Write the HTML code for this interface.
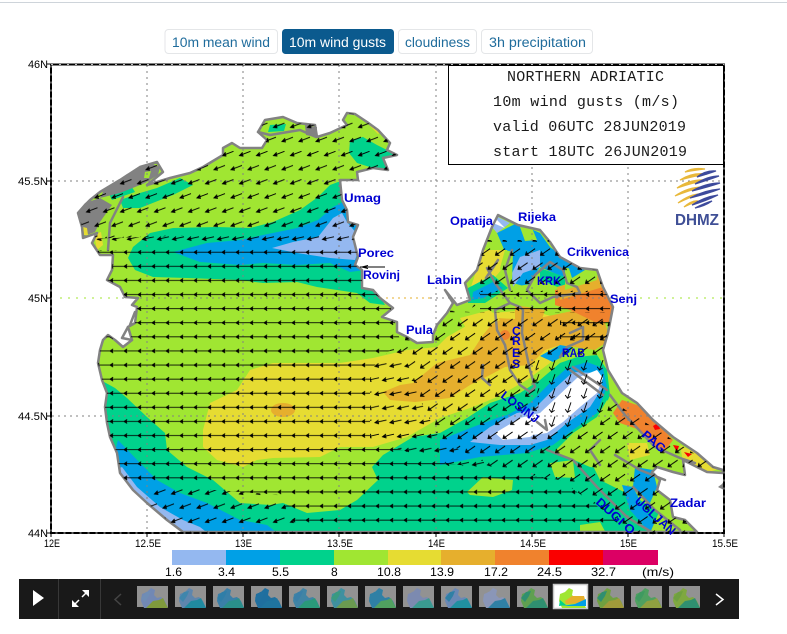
<!DOCTYPE html>
<html lang="en"><head><meta charset="utf-8"><title>Northern Adriatic</title>
<style>
html,body{margin:0;padding:0;background:#fff;width:787px;height:634px;overflow:hidden}
svg{display:block}
text{font-family:"Liberation Sans",sans-serif}
.btn{font-size:13.5px;fill:#1f6c9c}
.ttl{font-family:"Liberation Mono",monospace;font-size:15px;fill:#1a1a1a}
.ax{font-size:11px;fill:#000}
.lb{font-size:12px;font-weight:bold;fill:#0000d2}
.g{fill:none;stroke:#828282;stroke-width:1;stroke-dasharray:2 4}
.isl{fill:none;stroke:#828282;stroke-width:2.5;stroke-linejoin:round;stroke-linecap:round}
.a{fill:none;stroke:#000;stroke-width:.95}
</style></head><body>
<svg width="787" height="634" viewBox="0 0 787 634" xmlns="http://www.w3.org/2000/svg">
<defs>
<polygon id="sea" points="78,213 85,205 90,200 100,192 120,180 140,167 157,162 163,172 147,185 170,178 190,173 203,167 223,155 223,148 232,143 240,148 262,148 267,140 258,132 265,120 283,117 297,123 315,125 317,137 330,133 347,125 343,120 347,113 355,114 367,122 378,130 390,143 387,150 397,155 383,158 388,170 373,168 357,172 358,180 340,180 342,200 347,210 348,222 358,225 353,237 358,257 355,265 362,270 362,288 373,290 380,298 393,308 382,317 397,322 397,332 407,337 417,343 433,342 433,335 437,325 447,313 453,303 445,290 457,305 470,300 465,283 477,270 483,250 492,227 498,215 518,225 540,230 550,242 560,257 580,268 597,270 603,287 613,307 608,333 603,350 608,370 622,393 637,403 653,420 673,437 697,453 713,467 723,470 723,473 707,472 697,467 683,460 685,475 673,472 657,467 652,472 660,480 657,490 670,500 673,517 685,520 697,532 183,532 167,520 147,503 133,490 120,473 117,453 110,437 107,423 105,407 107,393 102,380 98,363 100,350 103,340 108,335 115,340 123,347 132,340 128,327 135,323 137,307 132,305 138,298 125,297 120,287 107,280 112,270 113,255 100,255 92,243 97,233 83,238 82,227"/>
<clipPath id="seaclip"><use href="#sea"/></clipPath>
<pattern id="pF" patternUnits="userSpaceOnUse" x="51" y="343.95" width="14" height="14.1">
<path d="M0 7H14M6.2 5L3 7L6.2 9" class="a"/><path d="M3 7L6 5.8V8.2Z" fill="#000"/>
</pattern>
<pattern id="pS" patternUnits="userSpaceOnUse" x="51" y="343.95" width="15" height="28.2">
<g id="as"><path d="M13 5.6L1.5 8.2M5 5.4L1.5 8.2L5.5 9.4" class="a"/><path d="M1.5 8.2L5 6.4L5.4 8.6Z" fill="#000"/></g>
<use href="#as" x="7.5" y="14.1"/><use href="#as" x="-7.5" y="14.1"/>
</pattern>
<pattern id="pT" patternUnits="userSpaceOnUse" x="51" y="343.95" width="17" height="28.2">
<g id="at"><path d="M12.5 4.8L1.5 9M4.6 5.8L1.5 9L5.4 9.5" class="a"/><path d="M1.5 9L4.8 6.6L5.3 8.8Z" fill="#000"/></g>
<use href="#at" x="8.5" y="14.1"/><use href="#at" x="-8.5" y="14.1"/>
</pattern>
<pattern id="pW" patternUnits="userSpaceOnUse" x="51" y="343.95" width="15" height="28.2">
<g id="aw"><path d="M11.6 3.4L2 10M3 6.2L2 10L6 10.2" class="a"/><path d="M2 10L3.6 7.2L5.4 9.2Z" fill="#000"/></g>
<use href="#aw" x="7.5" y="14.1"/><use href="#aw" x="-7.5" y="14.1"/>
</pattern>
<pattern id="pV" patternUnits="userSpaceOnUse" x="51" y="343.95" width="16" height="14.1">
<path d="M8 2L4.5 12M2.2 8.8L4.5 12L7.6 10" fill="none" stroke="#000" stroke-width=".9"/>
</pattern>
<polygon id="ts" points="5,8 10,6 14,2 18,4 17,9 20,12 24,11 28,15 31,22 7,22 4,15"/>
<polygon id="tb" points="9,22 16,15 22,14 26,12 31,22"/>
<polygon id="tc" points="4,12 9,6 14,5 12,10 8,16"/>
</defs>

<rect width="787" height="634" fill="#fff"/>
<rect x="0" y="2" width="787" height="1" fill="#ced4da"/>

<!-- buttons -->
<rect x="165" y="29.5" width="112.5" height="24" rx="3.5" fill="#fff" stroke="#e4e6e8"/>
<text class="btn" x="172" y="47" textLength="98" lengthAdjust="spacingAndGlyphs">10m mean wind</text>
<rect x="282" y="29" width="112" height="25" rx="3.5" fill="#0b5a8e"/>
<text class="btn" x="289" y="47" textLength="97" lengthAdjust="spacingAndGlyphs" style="fill:#fff">10m wind gusts</text>
<rect x="398.5" y="29.5" width="78" height="24" rx="3.5" fill="#fff" stroke="#e4e6e8"/>
<text class="btn" x="405" y="47" textLength="65" lengthAdjust="spacingAndGlyphs">cloudiness</text>
<rect x="481.5" y="29.5" width="111" height="24" rx="3.5" fill="#fff" stroke="#e4e6e8"/>
<text class="btn" x="489" y="47" textLength="97" lengthAdjust="spacingAndGlyphs">3h precipitation</text>

<!-- map colours -->
<use href="#sea" fill="#a0e632"/>
<g clip-path="url(#seaclip)">
<polygon fill="#00d28c" points="350,140 363,137 377,145 387,150 400,155 390,172 373,168 357,163 349,153"/>
<polygon fill="#00d28c" points="180,178 193,185 173,195 140,208 123,208 120,200 140,193 157,188"/>
<polygon fill="#00d28c" points="105,186 130,184 135,192 112,200"/>
<polygon fill="#00d28c" points="270,125 286,124 284,131 268,132"/>
<polygon fill="#e6dc32" points="372,116 384,130 378,134 366,122"/>
<polygon fill="#00d28c" points="338,182 330,185 318,197 300,210 273,222 250,228 217,227 173,228 150,233 133,247 128,258 135,270 153,277 187,278 240,280 263,283 297,282 317,287 337,290 357,293 370,303 385,305 370,280 365,180"/>
<polygon fill="#00a0e6" points="343,202 333,207 318,220 297,228 263,235 240,240 207,243 173,252 200,262 240,265 263,263 297,265 330,263 350,272 365,270 365,205"/>
<polygon fill="#94b8f0" points="342,213 333,218 318,237 293,242 272,248 297,253 330,258 355,260 362,240 347,222"/>

<!-- yellow -->
<polygon fill="#e6dc32" points="203,430 210,403 237,390 250,370 273,363 340,363 373,358 407,350 437,347 447,337 473,322 490,313 530,310 600,330 600,345 563,347 550,363 527,380 497,397 473,407 440,418 407,437 373,447 340,447 320,457 273,458 257,460 243,467 217,460 203,447"/>
<polygon fill="#e6af2d" points="383,392 400,385 413,383 437,363 470,355 483,335 497,318 530,320 600,305 610,340 595,350 560,345 545,350 530,365 505,367 490,375 470,385 450,398 415,402 390,400"/>
<ellipse cx="283" cy="410" rx="12" ry="7" fill="#e6af2d"/>
<polygon fill="#f0822d" points="555,290 575,285 590,280 600,285 615,307 612,322 595,322 570,310 555,305"/>
<circle cx="505" cy="335" r="5" fill="#f0822d"/>

<!-- south teal -->
<polygon fill="#00d28c" points="95,377 115,388 127,398 147,417 165,433 167,450 187,467 213,480 240,503 270,505 283,503 307,513 340,510 357,500 378,480 372,467 383,455 413,437 440,433 467,418 490,403 520,393 540,380 560,363 577,357 597,355 607,370 610,395 600,420 580,440 600,480 640,500 700,540 95,540"/>
<polygon fill="#00a0e6" points="118,440 140,463 157,480 180,493 207,503 240,520 267,525 280,535 150,535 110,470"/>
<polygon fill="#94b8f0" points="122,467 137,487 160,507 183,520 200,527 210,535 170,535 130,500 115,470"/>
<polygon fill="#a0e632" points="467,492 483,477 513,480 512,490 493,497 470,495"/>
<polygon fill="#a0e632" points="580,525 600,522 607,535 580,535"/>
<!-- east green -->
<polygon fill="#a0e632" points="553,453 573,433 597,417 607,400 627,417 647,450 653,467 637,467 630,477 617,470 590,467 567,457"/>
<polygon fill="#a0e632" points="550,463 573,460 575,478 555,477"/>
<polygon fill="#00a0e6" points="635,467 653,470 657,487 650,503 640,497 633,487"/>
<polygon fill="#00a0e6" points="622,485 633,487 645,510 660,530 650,533 630,510"/>
<polygon fill="#a0e632" points="660,510 680,520 695,533 650,533"/>
<polygon fill="#e6dc32" points="627,443 647,443 650,455 630,460"/>
<polygon fill="#e6dc32" points="680,445 700,455 722,468 705,473 683,462"/>
<polygon fill="#f0822d" points="613,413 622,400 637,405 657,423 673,440 663,453 653,447 640,430 620,423"/>
<polygon fill="#fa0000" points="653,426 658,423 660,429 655,430"/>
<polygon fill="#fa0000" points="673,445 679,446 677,452"/>
<polygon fill="#fa0000" points="684,452 692,454 688,457"/>
<!-- Losinj wake -->
<polygon fill="#00a0e6" points="440,440 473,427 497,418 507,415 530,403 550,383 567,368 587,362 603,368 607,387 597,413 573,430 553,445 527,453 480,457 440,465"/>
<polygon fill="#94b8f0" points="470,442 490,427 517,413 533,410 553,390 573,372 597,373 603,387 590,407 567,423 547,440 530,445 500,445"/>
<polygon fill="#fff" points="495,433 520,418 540,413 557,397 577,378 597,370 603,378 597,393 580,407 563,422 547,433 533,435 530,437 503,440"/>
<polygon fill="#00a0e6" points="540,356 560,345 572,347 570,352 553,362"/>

<!-- Kvarner north -->
<polygon fill="#00a0e6" points="497,233 517,223 540,233 550,247 563,257 583,270 563,277 540,267 527,287 513,283 503,247"/>
<polygon fill="#94b8f0" points="492,227 498,217 510,223 497,233"/>
<polygon fill="#a0e632" points="520,227 532,228 537,240 525,241"/>
<polygon fill="#94b8f0" points="520,257 540,250 540,267 523,273 513,287 512,273"/>
<polygon fill="#e6dc32" points="483,250 507,250 510,260 490,283 470,290"/>
<polygon fill="#a0e632" points="505,250 513,252 512,280 503,283 500,268"/>
<polygon fill="#00d28c" points="468,288 493,275 508,288 485,303 468,303"/>
<polygon fill="#00a0e6" points="473,292 493,282 503,288 483,298 472,300"/>
<polygon fill="#a0e632" points="513,287 553,280 553,293 507,300"/>
<polygon fill="#00d28c" points="540,268 565,277 565,290 540,280"/>
<polygon fill="#e6af2d" points="557,287 597,275 603,287 560,300"/>
<polygon fill="#a0e632" points="565,268 597,270 597,280 565,290"/>
<polygon fill="#00a0e6" points="568,265 585,270 572,278"/>
<polygon fill="#e6af2d" points="515,305 545,310 535,340 515,350"/>
<polygon fill="#e6dc32" points="460,318 490,310 500,320 470,335"/>
<polygon fill="#fff" points="493,223 505,228 497,220"/>
</g>

<!-- land fills -->
<polygon fill="#828282" points="78,213 85,203 100,198 112,205 100,222 95,232 84,236 82,225"/>
<polygon fill="#828282" points="137,168 150,163 160,167 158,175 145,183 120,193 100,198 105,188 120,180"/>
<polygon fill="#a0e632" points="145,172 151,171 149,178 144,178"/>
<polygon fill="#e6dc32" points="83,227 87,228 88,235 84,235"/>
<polygon fill="#e6dc32" points="94,234 101,232 103,245 97,250"/>
<polygon fill="#828282" points="305,125 317,127 316,137 306,135"/>
<polygon fill="#828282" points="722,484 724,481 724,490 718,487"/>

<!-- grid -->
<g class="g">
<path d="M147 65V532M243 65V532M339 65V532M436 65V532M532 65V532M628 65V532"/>
<path d="M52 181H723M122 298H380M430 298H640M52 416H723"/>
</g>
<path d="M60 298H122M640 298H722" fill="none" stroke="#a0e632" stroke-dasharray="2 6"/>
<path d="M380 298H432" fill="none" stroke="#e6af2d" stroke-dasharray="2 4"/>

<!-- islands and coast -->
<use href="#sea" fill="none" stroke="#828282" stroke-width="2.5" stroke-linejoin="round"/>
<g class="isl">
<path d="M123 197L110 223L108 250M258 132L270 135L300 130L316 137"/>
<path d="M128 327L122 338L132 340M135 312L130 325"/>
<path d="M487 268L495 283L510 303L520 307L523 310L522 333L530 370L535 387L530 392L520 385L510 370L505 345L497 330L495 310L510 303"/>
<path d="M512 250L505 270L510 290M498 260L486 278"/>
<path d="M563 270L567 283L577 287L580 293L553 297L540 303L527 290L535 275L550 262Z"/>
<path d="M570 333L583 327L583 340L567 347L560 357"/>
<path d="M573 367L607 390M570 370L603 395"/>
<path d="M483 365L482 378L490 385M537 422L547 430L545 420"/>
<path d="M547 450L573 460L597 487L627 517L653 533"/>
<path d="M633 487L655 510L680 530M600 440L590 450L600 465"/>
<path d="M610 395L625 415L655 447L680 458L695 463M615 455L640 470L665 480"/>
</g>

<!-- wind arrows -->
<g clip-path="url(#seaclip)">
<polygon fill="url(#pT)" points="50,100 420,100 420,228 50,240"/>
<polygon fill="url(#pS)" points="50,240 420,228 420,245 50,252"/>
<polygon fill="url(#pF)" points="50,252 372,245 400,340 370,370 370,440 440,462 560,480 610,515 640,535 300,535 280,495 150,485 50,470"/>
<polygon fill="url(#pS)" points="370,370 400,340 420,400 440,440 500,470 560,480 440,462 370,440"/>
<polygon fill="url(#pT)" points="150,485 280,495 300,535 150,535"/>
<polygon fill="url(#pW)" points="400,340 440,310 470,312 480,292 470,240 620,240 620,292 480,292 480,312 610,312 610,360 535,360 540,430 590,430 610,400 720,470 720,535 640,535 610,515 560,480 500,470 440,440 420,400"/>
<polygon fill="url(#pF)" points="480,292 610,292 610,312 480,312"/>
<polygon fill="url(#pF)" points="560,315 612,315 612,342 560,342"/>
<polygon fill="url(#pV)" points="535,360 610,360 610,400 590,430 540,430"/>
</g>
<path d="M360 267H385M368 265.5L362 267L368 268.5" fill="none" stroke="#000" stroke-width="1"/>

<!-- frame -->
<rect x="51" y="64.5" width="673" height="468.5" fill="none" stroke="#000" stroke-width="2"/>
<rect x="51" y="64.5" width="673" height="468.5" fill="none" stroke="#bbb" stroke-width="1" stroke-dasharray="2 6"/>
<rect x="448.5" y="65.5" width="275" height="99" fill="#fff" stroke="#000" stroke-width="1"/>
<text class="ttl" x="507" y="81" textLength="157">NORTHERN ADRIATIC</text>
<text class="ttl" x="493" y="106" textLength="186">10m wind gusts (m/s)</text>
<text class="ttl" x="493" y="131" textLength="193">valid 06UTC 28JUN2019</text>
<text class="ttl" x="493" y="156" textLength="194">start 18UTC 26JUN2019</text>

<!-- logo -->
<g stroke-width="1.2">
<g fill="#e8b83a" stroke="#e8b83a">
<path d="M685 172Q693 167 705 169Q696 170 685 172Z"/>
<path d="M680 180Q692 172 707 174Q694 176 680 180Z"/>
<path d="M677 188Q690 179 706 180Q692 183 677 188Z"/>
<path d="M675 196Q688 187 703 187Q690 190 675 196Z"/>
<path d="M678 203Q690 194 700 194Q690 197 678 203Z"/>
<path d="M684 207Q692 200 698 201Q692 203 684 207Z"/>
</g>
<g fill="#3d4a9c" stroke="#3d4a9c">
<path d="M697 177Q706 170 716 171Q708 174 697 177Z"/>
<path d="M695 184Q708 176 719 176Q708 180 695 184Z"/>
<path d="M692 191Q706 183 720 183Q708 187 692 191Z"/>
<path d="M690 198Q705 190 720 189Q707 194 690 198Z"/>
<path d="M692 205Q704 197 718 195Q706 201 692 205Z"/>
<path d="M695 208Q705 203 712 201Q705 206 695 208Z"/>
</g>
<text x="675" y="225" textLength="44" lengthAdjust="spacingAndGlyphs" style="font-size:15.5px;font-weight:bold;fill:#3f4f96;stroke:none">DHMZ</text>
</g>

<!-- place labels -->
<g class="lb">
<text x="344" y="202" textLength="37" lengthAdjust="spacingAndGlyphs">Umag</text>
<text x="358" y="257" textLength="36" lengthAdjust="spacingAndGlyphs">Porec</text>
<text x="363" y="279" textLength="37" lengthAdjust="spacingAndGlyphs">Rovinj</text>
<text x="427" y="284" textLength="35" lengthAdjust="spacingAndGlyphs">Labin</text>
<text x="406" y="334" textLength="27" lengthAdjust="spacingAndGlyphs">Pula</text>
<text x="450" y="225" textLength="43" lengthAdjust="spacingAndGlyphs">Opatija</text>
<text x="518" y="221" textLength="38" lengthAdjust="spacingAndGlyphs">Rijeka</text>
<text x="567" y="256" textLength="62" lengthAdjust="spacingAndGlyphs">Crikvenica</text>
<text x="537" y="285" textLength="24" lengthAdjust="spacingAndGlyphs">KRK</text>
<text x="610" y="303" textLength="27" lengthAdjust="spacingAndGlyphs">Senj</text>
<text x="512" y="335">C</text><text x="512" y="345">R</text><text x="512" y="357">E</text><text x="512" y="368">S</text>
<text x="562" y="357" textLength="23" lengthAdjust="spacingAndGlyphs">RAB</text>
<text x="670" y="507" textLength="36" lengthAdjust="spacingAndGlyphs">Zadar</text>
<text transform="translate(500,397) rotate(37)" textLength="44" lengthAdjust="spacingAndGlyphs">LOSINJ</text>
<text transform="translate(641,436) rotate(40)" textLength="27" lengthAdjust="spacingAndGlyphs">PAG</text>
<text transform="translate(595,503) rotate(42)" textLength="48" lengthAdjust="spacingAndGlyphs">DUGI O</text>
<text transform="translate(634,502) rotate(42)" textLength="50" lengthAdjust="spacingAndGlyphs">UGLJAN</text>
</g>

<!-- axes -->
<g class="ax">
<text x="28" y="68" textLength="20" lengthAdjust="spacingAndGlyphs">46N</text>
<text x="18" y="185" textLength="30" lengthAdjust="spacingAndGlyphs">45.5N</text>
<text x="28" y="302" textLength="20" lengthAdjust="spacingAndGlyphs">45N</text>
<text x="18" y="420" textLength="30" lengthAdjust="spacingAndGlyphs">44.5N</text>
<text x="28" y="537" textLength="20" lengthAdjust="spacingAndGlyphs">44N</text>
<text x="44" y="547" textLength="16" lengthAdjust="spacingAndGlyphs">12E</text>
<text x="135" y="547" textLength="26" lengthAdjust="spacingAndGlyphs">12.5E</text>
<text x="235" y="547" textLength="17" lengthAdjust="spacingAndGlyphs">13E</text>
<text x="327" y="547" textLength="26" lengthAdjust="spacingAndGlyphs">13.5E</text>
<text x="428" y="547" textLength="17" lengthAdjust="spacingAndGlyphs">14E</text>
<text x="520" y="547" textLength="26" lengthAdjust="spacingAndGlyphs">14.5E</text>
<text x="620" y="547" textLength="17" lengthAdjust="spacingAndGlyphs">15E</text>
<text x="712" y="547" textLength="26" lengthAdjust="spacingAndGlyphs">15.5E</text>
</g>
<path d="M51 533v4M147 533v4M243 533v4M339 533v4M436 533v4M532 533v4M628 533v4M724 533v4M47 64h4M47 181h4M47 298h4M47 416h4M47 533h4" stroke="#000" fill="none"/>

<!-- colour bar -->
<rect x="172" y="550" width="54" height="15" fill="#94b8f0"/>
<rect x="226" y="550" width="54" height="15" fill="#00a0e6"/>
<rect x="280" y="550" width="54" height="15" fill="#00d28c"/>
<rect x="334" y="550" width="54" height="15" fill="#a0e632"/>
<rect x="388" y="550" width="53" height="15" fill="#e6dc32"/>
<rect x="441" y="550" width="54" height="15" fill="#e6af2d"/>
<rect x="495" y="550" width="54" height="15" fill="#f0822d"/>
<rect x="549" y="550" width="54" height="15" fill="#fa0000"/>
<rect x="603" y="550" width="55" height="15" fill="#dc0064"/>
<g class="ax" style="font-size:12px">
<text x="165" y="576" textLength="17" lengthAdjust="spacingAndGlyphs">1.6</text>
<text x="218" y="576" textLength="17" lengthAdjust="spacingAndGlyphs">3.4</text>
<text x="272" y="576" textLength="17" lengthAdjust="spacingAndGlyphs">5.5</text>
<text x="331" y="576">8</text>
<text x="377" y="576" textLength="24" lengthAdjust="spacingAndGlyphs">10.8</text>
<text x="430" y="576" textLength="24" lengthAdjust="spacingAndGlyphs">13.9</text>
<text x="484" y="576" textLength="24" lengthAdjust="spacingAndGlyphs">17.2</text>
<text x="537" y="576" textLength="25" lengthAdjust="spacingAndGlyphs">24.5</text>
<text x="591" y="576" textLength="25" lengthAdjust="spacingAndGlyphs">32.7</text>
<text x="642" y="576" textLength="32" lengthAdjust="spacingAndGlyphs">(m/s)</text>
</g>

<!-- player -->
<rect x="19" y="579" width="720" height="40" fill="#191919"/>
<rect x="58" y="579" width="1" height="40" fill="#383838"/>
<rect x="100" y="579" width="1" height="40" fill="#383838"/>
<polygon points="33,590 44,598 33,606" fill="#fff"/>
<path d="M89 590H82L89 597ZM72 607V600L79 607Z" fill="#fff"/>
<path d="M86 593L82 597M79 600L75 604" stroke="#fff" stroke-width="1.5" fill="none"/>
<path d="M121 594L115 599.5L121 605" fill="none" stroke="#444" stroke-width="1.5"/>
<path d="M716 594L723 599.5L716 605" fill="none" stroke="#fff" stroke-width="1.5"/>

<!-- thumbnails -->
<g>
<rect x="137" y="586" width="31" height="21" fill="#929292"/><use href="#ts" x="137" y="586" fill="#7288b4"/><use href="#tb" x="137" y="586" fill="#7f9a3c"/><use href="#tc" x="137" y="586" fill="#6f8db5"/>
<rect x="175" y="586" width="31" height="21" fill="#929292"/><use href="#ts" x="175" y="586" fill="#5e86ae"/><use href="#tb" x="175" y="586" fill="#208aa0"/><use href="#tc" x="175" y="586" fill="#3f86ac"/>
<rect x="213" y="586" width="31" height="21" fill="#929292"/><use href="#ts" x="213" y="586" fill="#3a7fa8"/><use href="#tb" x="213" y="586" fill="#2a8f8a"/><use href="#tc" x="213" y="586" fill="#2f7ea8"/>
<rect x="251" y="586" width="31" height="21" fill="#929292"/><use href="#ts" x="251" y="586" fill="#1f6f9f"/><use href="#tb" x="251" y="586" fill="#1f749f"/><use href="#tc" x="251" y="586" fill="#2070a0"/>
<rect x="289" y="586" width="31" height="21" fill="#929292"/><use href="#ts" x="289" y="586" fill="#4084a5"/><use href="#tb" x="289" y="586" fill="#2a9a7a"/><use href="#tc" x="289" y="586" fill="#3a7fa8"/>
<rect x="327" y="586" width="31" height="21" fill="#929292"/><use href="#ts" x="327" y="586" fill="#3f90a0"/><use href="#tb" x="327" y="586" fill="#6a9a50"/><use href="#tc" x="327" y="586" fill="#3a9a80"/>
<rect x="365" y="586" width="31" height="21" fill="#929292"/><use href="#ts" x="365" y="586" fill="#2f80a5"/><use href="#tb" x="365" y="586" fill="#50a060"/><use href="#tc" x="365" y="586" fill="#2f80a5"/>
<rect x="403" y="586" width="31" height="21" fill="#929292"/><use href="#ts" x="403" y="586" fill="#7c8ab0"/><use href="#tb" x="403" y="586" fill="#3a9a90"/><use href="#tc" x="403" y="586" fill="#7c8ab0"/>
<rect x="441" y="586" width="31" height="21" fill="#929292"/><use href="#ts" x="441" y="586" fill="#6a88b5"/><use href="#tb" x="441" y="586" fill="#2090a0"/><use href="#tc" x="441" y="586" fill="#2f80a5"/>
<rect x="479" y="586" width="31" height="21" fill="#929292"/><use href="#ts" x="479" y="586" fill="#8a96b8"/><use href="#tb" x="479" y="586" fill="#2f80a5"/><use href="#tc" x="479" y="586" fill="#8a96b8"/>
<rect x="517" y="586" width="31" height="21" fill="#929292"/><use href="#ts" x="517" y="586" fill="#5fa050"/><use href="#tb" x="517" y="586" fill="#2f8f70"/><use href="#tc" x="517" y="586" fill="#2f8f70"/>
<rect x="553.5" y="584.5" width="34" height="24" fill="#fff" stroke="#c8c8c8" stroke-width="1.5"/>
<use href="#ts" x="555" y="586" fill="#a0e632"/><polygon points="565,601 572,596 584,596 586,603 566,604" fill="#e6af2d"/><polygon points="562,606 575,604 586,599 586,606" fill="#00a0e6"/><polygon points="560,600 566,605 559,606" fill="#00d28c"/>
<rect x="593" y="586" width="31" height="21" fill="#929292"/><use href="#ts" x="593" y="586" fill="#6fa040"/><use href="#tb" x="593" y="586" fill="#a09a3a"/><use href="#tc" x="593" y="586" fill="#2f8f70"/>
<rect x="631" y="586" width="31" height="21" fill="#929292"/><use href="#ts" x="631" y="586" fill="#4fa060"/><use href="#tb" x="631" y="586" fill="#8fa040"/><use href="#tc" x="631" y="586" fill="#3f9a60"/>
<rect x="669" y="586" width="31" height="21" fill="#929292"/><use href="#ts" x="669" y="586" fill="#7fa840"/><use href="#tb" x="669" y="586" fill="#2f8f70"/><use href="#tc" x="669" y="586" fill="#6fa040"/>
</g>
</svg>
</body></html>
